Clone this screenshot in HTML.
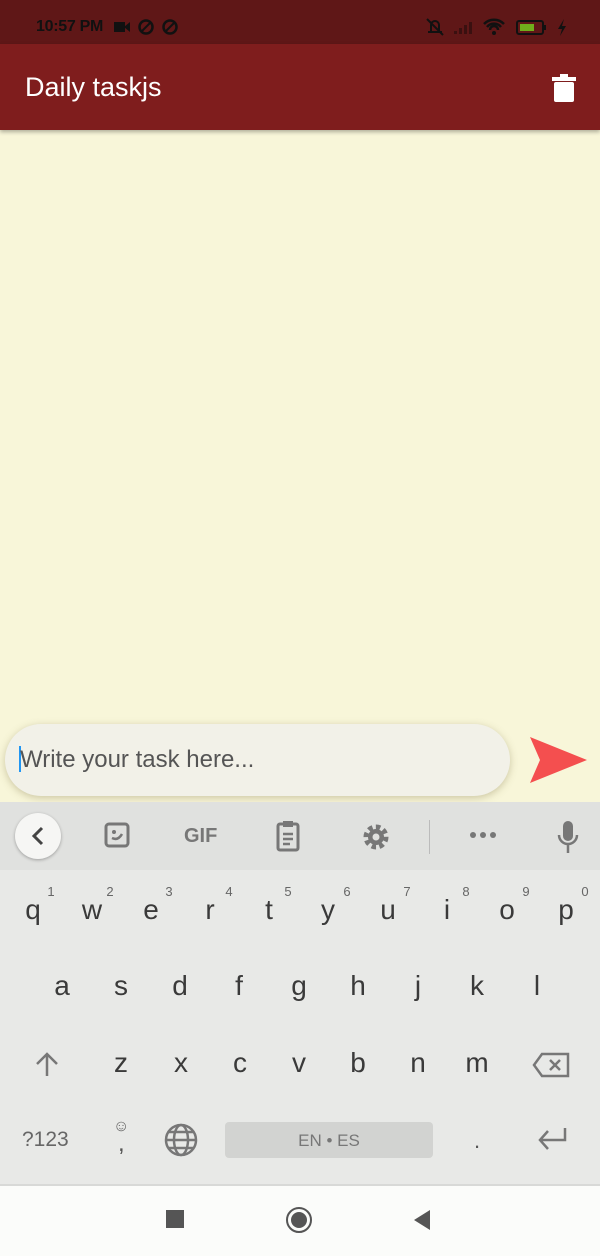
<!DOCTYPE html>
<html><head><style>
*{margin:0;padding:0;box-sizing:border-box}
body{width:600px;height:1256px;position:relative;overflow:hidden;background:#f8f6d9;font-family:"Liberation Sans",sans-serif}
.a{position:absolute}
.k{position:absolute;width:40px;margin-left:-20px;text-align:center;font-size:28px;color:#3a3a3a;line-height:32px}
.n{position:absolute;font-size:13px;color:#666;width:14px;margin-left:-7px;text-align:center}
</style></head><body>
<div class="a" style="left:0;top:0;width:600px;height:44px;background:#5f1717"></div>
<div class="a" style="left:36px;top:18px;font-size:16px;font-weight:bold;color:#111;letter-spacing:-0.3px">10:57 PM</div>
<svg class="a" style="left:112px;top:18px" width="80" height="18"><rect x="2" y="4" width="11" height="10" fill="#111"/><path d="M12 9l6-5v10z" fill="#111"/><circle cx="34" cy="9" r="6.5" fill="none" stroke="#111" stroke-width="2.5"/><path d="M30 13l8-8" stroke="#111" stroke-width="2"/><circle cx="58" cy="9" r="6.5" fill="none" stroke="#111" stroke-width="2.5"/><path d="M54 13l8-8" stroke="#111" stroke-width="2"/></svg>
<svg class="a" style="left:424px;top:16px" width="150" height="22"><path d="M4 16h14M7 16V9a4 4 0 018 0v7M3 3l16 16" stroke="#111" stroke-width="2" fill="none"/><path d="M30 18h3v-3h-3zM35 18h3v-6h-3zM40 18h3v-9h-3zM45 18h3v-12h-3z" fill="#3a1010"/><path d="M60 8a14 14 0 0120 0M63 11a9 9 0 0114 0M66 14a4 4 0 018 0" stroke="#111" stroke-width="2.5" fill="none"/><circle cx="70" cy="17" r="2" fill="#111"/><rect x="93" y="5" width="26" height="13" rx="2" fill="none" stroke="#111" stroke-width="2"/><rect x="96" y="8" width="14" height="7" fill="#6fae1c"/><rect x="120" y="9" width="2" height="5" fill="#111"/><path d="M140 3l-6 10h4l-2 7 6-10h-4z" fill="#111"/></svg>
<div class="a" style="left:0;top:44px;width:600px;height:86px;background:#7f1d1d;box-shadow:0 2px 4px rgba(0,0,0,.3)"></div>
<div class="a" style="left:25px;top:72px;font-size:27px;color:#fff">Daily taskjs</div>
<svg class="a" style="left:552px;top:74px" width="24" height="28"><rect x="0" y="3" width="24" height="4" fill="#fff"/><rect x="8" y="0" width="8" height="4" fill="#fff"/><rect x="2" y="8" width="20" height="20" rx="2" fill="#fff"/></svg>
<div class="a" style="left:5px;top:724px;width:505px;height:72px;border-radius:36px;background:#f2f1e8;box-shadow:0 2px 8px rgba(120,110,60,.35)"></div>
<div class="a" style="left:19px;top:746px;width:2px;height:26px;background:#2196f3"></div>
<div class="a" style="left:20px;top:746px;font-size:24px;color:#555">Write your task here...</div>
<svg class="a" style="left:530px;top:737px" width="58" height="46"><path d="M0 0L57 23L0 46L10 23z" fill="#f44f4f"/></svg>
<div class="a" style="left:0;top:802px;width:600px;height:384px;background:#e8e9e7"></div>
<div class="a" style="left:0;top:802px;width:600px;height:68px;background:#e0e1df"></div>
<div class="a" style="left:15px;top:813px;width:46px;height:46px;border-radius:23px;background:#f6f6f4;box-shadow:0 1px 3px rgba(0,0,0,.3)"></div>
<svg class="a" style="left:30px;top:826px" width="16" height="20"><path d="M12 2L4 10l8 8" stroke="#444" stroke-width="3" fill="none"/></svg>
<svg class="a" style="left:104px;top:822px" width="28" height="28"><rect x="2" y="2" width="22" height="22" rx="3" fill="none" stroke="#777" stroke-width="3"/><circle cx="10" cy="10" r="2" fill="#777"/><path d="M8 16q6 3 10-4" stroke="#777" stroke-width="2.5" fill="none"/></svg>
<div class="a" style="left:184px;top:825px;font-size:20px;font-weight:bold;color:#777">GIF</div>
<svg class="a" style="left:276px;top:820px" width="26" height="32"><rect x="2" y="4" width="20" height="26" rx="2" fill="none" stroke="#777" stroke-width="3"/><rect x="7" y="1" width="10" height="6" fill="#777"/><path d="M7 14h10M7 19h10M7 24h7" stroke="#777" stroke-width="2.5"/></svg>
<svg class="a" style="left:362px;top:823px" width="28" height="28"><circle cx="14" cy="14" r="9" fill="none" stroke="#777" stroke-width="7" stroke-dasharray="4 3"/><circle cx="14" cy="14" r="8" fill="#777"/><circle cx="14" cy="14" r="3.5" fill="#e0e1df"/></svg>
<div class="a" style="left:429px;top:820px;width:1px;height:34px;background:#bbb"></div>
<svg class="a" style="left:469px;top:830px" width="28" height="10"><circle cx="4" cy="5" r="3" fill="#777"/><circle cx="14" cy="5" r="3" fill="#777"/><circle cx="24" cy="5" r="3" fill="#777"/></svg>
<svg class="a" style="left:556px;top:820px" width="24" height="34"><rect x="7" y="1" width="10" height="20" rx="5" fill="#777"/><path d="M3 15a9 9 0 0018 0M12 24v9" stroke="#777" stroke-width="2.5" fill="none"/></svg>
<div class="k" style="left:33px;top:894px">q</div><div class="k" style="left:92px;top:894px">w</div><div class="k" style="left:151px;top:894px">e</div><div class="k" style="left:210px;top:894px">r</div><div class="k" style="left:269px;top:894px">t</div><div class="k" style="left:328px;top:894px">y</div><div class="k" style="left:388px;top:894px">u</div><div class="k" style="left:447px;top:894px">i</div><div class="k" style="left:507px;top:894px">o</div><div class="k" style="left:566px;top:894px">p</div>
<div class="n" style="left:51px;top:884px">1</div><div class="n" style="left:110px;top:884px">2</div><div class="n" style="left:169px;top:884px">3</div><div class="n" style="left:229px;top:884px">4</div><div class="n" style="left:288px;top:884px">5</div><div class="n" style="left:347px;top:884px">6</div><div class="n" style="left:407px;top:884px">7</div><div class="n" style="left:466px;top:884px">8</div><div class="n" style="left:526px;top:884px">9</div><div class="n" style="left:585px;top:884px">0</div>
<div class="k" style="left:62px;top:970px">a</div><div class="k" style="left:121px;top:970px">s</div><div class="k" style="left:180px;top:970px">d</div><div class="k" style="left:239px;top:970px">f</div><div class="k" style="left:299px;top:970px">g</div><div class="k" style="left:358px;top:970px">h</div><div class="k" style="left:418px;top:970px">j</div><div class="k" style="left:477px;top:970px">k</div><div class="k" style="left:537px;top:970px">l</div>
<svg class="a" style="left:35px;top:1051px" width="24" height="26"><path d="M12 25V3M2 13L12 3l10 10" stroke="#777" stroke-width="2.5" fill="none"/></svg>
<div class="k" style="left:121px;top:1047px">z</div><div class="k" style="left:181px;top:1047px">x</div><div class="k" style="left:240px;top:1047px">c</div><div class="k" style="left:299px;top:1047px">v</div><div class="k" style="left:358px;top:1047px">b</div><div class="k" style="left:418px;top:1047px">n</div><div class="k" style="left:477px;top:1047px">m</div>
<svg class="a" style="left:532px;top:1052px" width="38" height="26"><path d="M10 2h26v22H10L2 13z" stroke="#777" stroke-width="2.5" fill="none"/><path d="M18 8l10 10M28 8L18 18" stroke="#777" stroke-width="2.5"/></svg>
<div class="a" style="left:22px;top:1128px;font-size:21px;color:#666">?123</div>
<div class="a" style="left:113px;top:1118px;font-size:16px;color:#666">☺</div>
<div class="a" style="left:118px;top:1130px;font-size:24px;color:#555">,</div>
<svg class="a" style="left:164px;top:1123px" width="34" height="34"><circle cx="17" cy="17" r="15" fill="none" stroke="#777" stroke-width="2.5"/><ellipse cx="17" cy="17" rx="7" ry="15" fill="none" stroke="#777" stroke-width="2.5"/><path d="M2 17h30M5 9h24M5 25h24" stroke="#777" stroke-width="2.5"/></svg>
<div class="a" style="left:225px;top:1122px;width:208px;height:36px;border-radius:4px;background:#d2d3d1"></div>
<div class="a" style="left:225px;top:1131px;width:208px;text-align:center;font-size:17px;color:#777">EN • ES</div>
<div class="a" style="left:474px;top:1128px;font-size:22px;color:#555">.</div>
<svg class="a" style="left:536px;top:1126px" width="32" height="24"><path d="M29 2v12H4M12 5l-8 9 8 9" stroke="#777" stroke-width="2.5" fill="none"/></svg>
<div class="a" style="left:0;top:1184px;width:600px;height:2px;background:#d8d9d7"></div>
<div class="a" style="left:0;top:1186px;width:600px;height:70px;background:#fbfcfa"></div>
<div class="a" style="left:166px;top:1210px;width:18px;height:18px;background:#555"></div>
<div class="a" style="left:286px;top:1207px;width:26px;height:26px;border-radius:50%;border:2px solid #555"></div>
<div class="a" style="left:291px;top:1212px;width:16px;height:16px;border-radius:50%;background:#555"></div>
<svg class="a" style="left:413px;top:1209px" width="18" height="22"><path d="M17 1v20L1 11z" fill="#555"/></svg>
</body></html>
